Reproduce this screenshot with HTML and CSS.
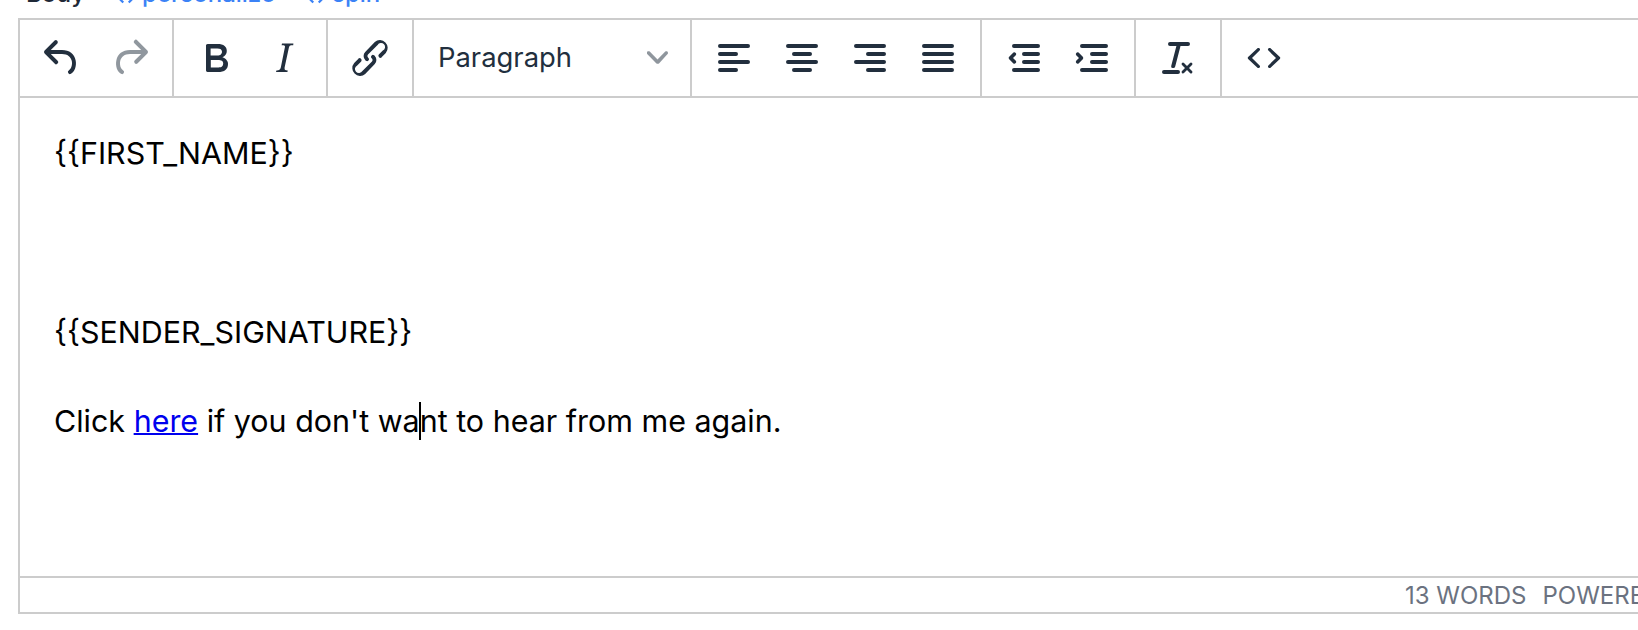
FILE: index.html
```html
<!DOCTYPE html>
<html lang="en">
<head>
<meta charset="utf-8">
<title>Email body editor</title>
<link rel="stylesheet" href="styles.css">
</head>
<body>
<div class="label-row">
  <span class="label">Body</span>
  <a class="var-link"><svg class="var-icon" viewBox="0 0 24 24"><path d="M9 6 3 12l6 6M15 6l6 6-6 6"/></svg>personalize</a>
  <a class="var-link"><svg class="var-icon" viewBox="0 0 24 24"><path d="M9 6 3 12l6 6M15 6l6 6-6 6"/></svg>spin</a>
</div>
<div class="editor">
  <div class="toolbar">
    <div class="group">
      <button class="btn"><svg class="icon" viewBox="0 0 24 24"><path d="M6.4 8H12c3.7 0 6.2 2 6.8 5.1.6 2.7-.4 5.6-2.3 6.8a1 1 0 0 1-1-1.8c1.1-.6 1.8-2.7 1.4-4.6-.5-2.1-2.1-3.5-4.9-3.5H6.4l3.3 3.3a1 1 0 1 1-1.4 1.4l-5-5a1 1 0 0 1 0-1.4l5-5a1 1 0 0 1 1.4 1.4L6.4 8z"/></svg></button>
      <button class="btn disabled"><svg class="icon" viewBox="0 0 24 24"><path d="M17.6 10H12c-2.8 0-4.4 1.4-4.9 3.5-.4 2 .3 4 1.4 4.6a1 1 0 1 1-1 1.8c-2-1.2-2.9-4.1-2.3-6.8.6-3 3-5.1 6.8-5.1h5.6l-3.3-3.3a1 1 0 1 1 1.4-1.4l5 5a1 1 0 0 1 0 1.4l-5 5a1 1 0 0 1-1.4-1.4l3.3-3.3z"/></svg></button>
    </div>
    <div class="group">
      <button class="btn"><svg class="icon" viewBox="0 0 24 24"><path d="M7.8 19c-.3 0-.5 0-.6-.2l-.2-.5V5.7c0-.2 0-.4.2-.5l.6-.2h5c1.5 0 2.7.3 3.5 1 .7.6 1.1 1.4 1.1 2.5a3 3 0 0 1-.6 1.9c-.4.6-1 1-1.6 1.2.4.1.9.3 1.3.6s.8.7 1 1.2c.4.4.5 1 .5 1.6 0 1.3-.4 2.3-1.3 3-.8.7-2.1 1-3.8 1H7.8zm5-8.3c.6 0 1.2-.1 1.6-.5.4-.3.6-.7.6-1.3 0-1.1-.8-1.7-2.3-1.7H9.3v3.5h3.4zm.5 6c.7 0 1.3-.1 1.7-.4.4-.4.6-.9.6-1.5s-.2-1-.7-1.4c-.4-.3-1-.4-2-.4H9.4v3.8h4z"/></svg></button>
      <button class="btn"><svg class="icon" viewBox="0 0 24 24"><path d="M16.7 4.7l-.1.9h-.3c-.6 0-1 0-1.4.3-.3.3-.4.6-.5 1.1l-2.1 9.8v.6c0 .5.4.8 1.4.8h.2l-.2.8H8l.2-.8h.2c1.1 0 1.8-.5 2-1.5l2-9.8.1-.5c0-.6-.4-.8-1.4-.8h-.3l.2-.9h5.8z"/></svg></button>
    </div>
    <div class="group">
      <button class="btn"><svg class="icon" viewBox="0 0 24 24"><path d="M6.2 12.3a1 1 0 0 1 1.4 1.4l-2 2a2 2 0 1 0 2.6 2.8l4.8-4.8a1 1 0 0 0 0-1.4 1 1 0 1 1 1.4-1.3 2.9 2.9 0 0 1 0 4L9.6 20a3.9 3.9 0 0 1-5.5-5.5l2-2zm11.6-.6a1 1 0 0 1-1.4-1.4l2-2a2 2 0 1 0-2.6-2.8L11 10.3a1 1 0 0 0 0 1.4A1 1 0 1 1 9.6 13a2.9 2.9 0 0 1 0-4L14.4 4a3.9 3.9 0 0 1 5.5 5.5l-2 2z"/></svg></button>
    </div>
    <div class="group">
      <button class="select"><span>Paragraph</span><svg class="chevron" viewBox="0 0 10 10"><path d="M8.7 2.2c.3-.3.8-.3 1 0 .4.4.4.9 0 1.2L5.7 7.8c-.3.3-.9.3-1.2 0L.2 3.4a.8.8 0 0 1 0-1.2c.3-.3.8-.3 1.1 0L5 6l3.7-3.8z"/></svg></button>
    </div>
    <div class="group">
      <button class="btn"><svg class="icon" viewBox="0 0 24 24"><path d="M5 5h14a1 1 0 0 1 0 2H5a1 1 0 0 1 0-2zm0 4h8a1 1 0 0 1 0 2H5a1 1 0 0 1 0-2zm0 8h8a1 1 0 0 1 0 2H5a1 1 0 0 1 0-2zm0-4h14a1 1 0 0 1 0 2H5a1 1 0 0 1 0-2z"/></svg></button>
      <button class="btn"><svg class="icon" viewBox="0 0 24 24"><path d="M5 5h14a1 1 0 0 1 0 2H5a1 1 0 0 1 0-2zm3 4h8a1 1 0 0 1 0 2H8a1 1 0 0 1 0-2zm0 8h8a1 1 0 0 1 0 2H8a1 1 0 0 1 0-2zm-3-4h14a1 1 0 0 1 0 2H5a1 1 0 0 1 0-2z"/></svg></button>
      <button class="btn"><svg class="icon" viewBox="0 0 24 24"><path d="M5 5h14a1 1 0 0 1 0 2H5a1 1 0 0 1 0-2zm6 4h8a1 1 0 0 1 0 2h-8a1 1 0 0 1 0-2zm0 8h8a1 1 0 0 1 0 2h-8a1 1 0 0 1 0-2zm-6-4h14a1 1 0 0 1 0 2H5a1 1 0 0 1 0-2z"/></svg></button>
      <button class="btn"><svg class="icon" viewBox="0 0 24 24"><path d="M5 5h14a1 1 0 0 1 0 2H5a1 1 0 0 1 0-2zm0 4h14a1 1 0 0 1 0 2H5a1 1 0 0 1 0-2zm0 4h14a1 1 0 0 1 0 2H5a1 1 0 0 1 0-2zm0 4h14a1 1 0 0 1 0 2H5a1 1 0 0 1 0-2z"/></svg></button>
    </div>
    <div class="group">
      <button class="btn"><svg class="icon" viewBox="0 0 24 24"><path d="M7 5h12a1 1 0 0 1 0 2H7a1 1 0 0 1 0-2zm5 4h7a1 1 0 0 1 0 2h-7a1 1 0 0 1 0-2zm0 4h7a1 1 0 0 1 0 2h-7a1 1 0 0 1 0-2zm-5 4h12a1 1 0 0 1 0 2H7a1 1 0 0 1 0-2zM6.700 9.300a.9.9 0 0 1 1.200 1.300L6.500 12l1.400 1.400a.9.9 0 0 1-1.200 1.300l-2.100-2.100a.9.9 0 0 1 0-1.200l2.100-2.100z"/></svg></button>
      <button class="btn"><svg class="icon" viewBox="0 0 24 24"><path d="M7 5h12a1 1 0 0 1 0 2H7a1 1 0 0 1 0-2zm5 4h7a1 1 0 0 1 0 2h-7a1 1 0 0 1 0-2zm0 4h7a1 1 0 0 1 0 2h-7a1 1 0 0 1 0-2zm-5 4h12a1 1 0 0 1 0 2H7a1 1 0 0 1 0-2zM5.300 9.300a.9.9 0 0 0-1.200 1.300L5.500 12l-1.400 1.400a.9.9 0 0 0 1.200 1.300l2.100-2.100a.9.9 0 0 0 0-1.200L5.300 9.300z"/></svg></button>
    </div>
    <div class="group">
      <button class="btn"><svg class="icon" viewBox="0 0 24 24"><path d="M13.2 6a1 1 0 0 1 0 .2l-2.600 10a1 1 0 0 1-1 .8h-.2a.8.8 0 0 1-.8-1l2.600-10H8a1 1 0 1 1 0-2h9a1 1 0 0 1 0 2h-3.800zM5 18h7a1 1 0 0 1 0 2H5a1 1 0 0 1 0-2zm13 1.500L16.500 18 15 19.500a.7.7 0 0 1-1-1l1.500-1.500-1.500-1.500a.7.7 0 0 1 1-1l1.500 1.500 1.500-1.500a.7.7 0 0 1 1 1L17.500 17l1.500 1.500a.7.7 0 0 1-1 1z"/></svg></button>
    </div>
    <div class="group last">
      <button class="btn"><svg class="icon" viewBox="0 0 24 24"><path d="M9.8 15.7c.3.3.3.8 0 1-.3.4-.9.4-1.2 0l-4.4-4.1a.8.8 0 0 1 0-1.2l4.4-4.2c.3-.3.9-.3 1.2 0 .3.3.3.8 0 1.1L6 12l3.8 3.7zm4.4 0c-.3.3-.3.8 0 1 .3.4.9.4 1.2 0l4.4-4.1a.8.8 0 0 0 0-1.2l-4.4-4.2c-.3-.3-.9-.3-1.2 0a.8.8 0 0 0 0 1.1L18 12l-3.8 3.7z"/></svg></button>
    </div>
  </div>
  <div class="content">
    <p>{{FIRST_NAME}}</p>
    <p>&nbsp;</p>
    <p>{{SENDER_SIGNATURE}}</p>
    <p>Click <a class="link">here</a> if you don't wa<span class="caret"></span>nt to hear from me again.</p>
  </div>
  <div class="status">
    <span>13 WORDS</span>
    <span class="brand">POWERED BY TINY</span>
  </div>
</div>
</body>
</html>
```
FILE: styles.css
```css
html, body { margin: 0; padding: 0; background: #fff; }
body { width: 1638px; height: 630px; overflow: hidden; font-family: Inter, "Noto Sans", sans-serif; }
.label-row { height: 18px; display: flex; align-items: flex-end; gap: 30px; padding: 0 0 10px 26px; box-sizing: border-box; overflow: hidden; font-size: 24px; line-height: 28px; }
.label { color: #1f2937; font-weight: 500; }
.var-link { display: flex; align-items: center; gap: 5px; color: #3b82f6; font-size: 24px; font-weight: 500; }
.var-icon { width: 22px; height: 22px; margin-top: 6px; fill: none; stroke: #3b82f6; stroke-width: 2.4; }
.editor { margin-left: 18px; width: 1700px; height: 596px; box-sizing: border-box; border: 2px solid #ccc; display: flex; flex-direction: column; }
.toolbar { height: 76px; display: flex; border-bottom: 2px solid #ccc; flex: none; }
.group { display: flex; align-items: center; padding: 0 8px; border-right: 2px solid #ccc; }
.group.last { border-right: 0; }
.btn { width: 68px; height: 68px; padding: 0; border: 0; background: none; display: flex; align-items: center; justify-content: center; }
.icon { width: 48px; height: 48px; fill: #222f3e; }
.btn.disabled .icon { fill: rgba(34, 47, 62, .5); }
.select { width: 260px; height: 68px; padding: 0 14px 2px 16px; border: 0; background: none; display: flex; align-items: center; justify-content: space-between; font: 400 27.4px Inter, sans-serif; color: #222f3e; }
.chevron { width: 21px; height: 21px; fill: #222f3e; opacity: .5; }
.content { flex: 1; padding: 33px 34px 0; color: #000; font-size: 30.45px; line-height: 44.8px; }
.content p { margin: 0 0 44.5px; }
.link { color: #0000ee; text-decoration: underline; text-decoration-thickness: 2px; }
.caret { display: inline-block; width: 2px; height: 38px; background: #000; vertical-align: -8px; margin: 0 -1px; }
.status { height: 34px; flex: none; border-top: 2px solid #ccc; display: flex; align-items: center; padding-left: 1385px; gap: 16px; font-size: 24px; color: #6b7280; white-space: nowrap; }
```
